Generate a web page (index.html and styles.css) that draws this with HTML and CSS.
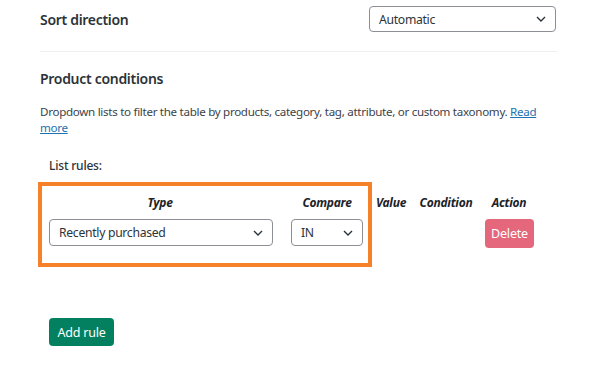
FILE: index.html
```html
<!DOCTYPE html>
<html>
<head>
<meta charset="utf-8">
<link rel="stylesheet" href="styles.css">
</head>
<body>
<div class="page">
  <div class="field-row">
    <div class="label">Sort direction</div>
    <div class="select select-wide">
      <span>Automatic</span>
      <svg class="chev" width="10" height="6" viewBox="0 0 10 6"><path d="M1 1l4 4 4-4" fill="none" stroke="#2c3338" stroke-width="1.4"/></svg>
    </div>
  </div>
  <div class="divider"></div>
  <div class="section-title">Product conditions</div>
  <p class="desc">Dropdown lists to filter the table by products, category, tag, attribute, or custom taxonomy. <a href="#">Read</a> <a href="#">more</a></p>
  <div class="list-label">List rules:</div>
  <div class="rules-wrap">
    <div class="rules">
      <div class="th">Type</div>
      <div class="th">Compare</div>
      <div class="th">Value</div>
      <div class="th">Condition</div>
      <div class="th">Action</div>
      <div class="td">
        <div class="select select-type">
          <span>Recently purchased</span>
          <svg class="chev" width="10" height="6" viewBox="0 0 10 6"><path d="M1 1l4 4 4-4" fill="none" stroke="#2c3338" stroke-width="1.4"/></svg>
        </div>
      </div>
      <div class="td">
        <div class="select select-compare">
          <span>IN</span>
          <svg class="chev" width="10" height="6" viewBox="0 0 10 6"><path d="M1 1l4 4 4-4" fill="none" stroke="#2c3338" stroke-width="1.4"/></svg>
        </div>
      </div>
      <div class="td"></div>
      <div class="td"></div>
      <div class="td td-center"><button class="btn btn-delete">Delete</button></div>
    </div>
    <div class="highlight"></div>
  </div>
  <div class="actions"><button class="btn btn-add">Add rule</button></div>
</div>
</body>
</html>
```
FILE: styles.css
```css
* { box-sizing: border-box; }
html, body { margin: 0; padding: 0; background: #fff; }
body {
  font-family: "Noto Sans", "Open Sans", sans-serif;
  color: #2c3338;
}
.page {
  width: 517px;
  margin-left: 40px;
  padding-top: 6px;
}
.field-row {
  display: flex;
  justify-content: space-between;
  align-items: center;
  height: 26px;
}
.label, .section-title {
  font-size: 14px;
  font-weight: 600;
  color: #2c3338;
  letter-spacing: -0.3px;
}
.select {
  display: flex;
  align-items: center;
  justify-content: space-between;
  border: 1px solid #8c8f94;
  border-radius: 4px;
  background: #fff;
  font-size: 12.2px;
  color: #2c3338;
  padding: 0 9px 0 9px;
  letter-spacing: -0.3px;
}
.select-wide { width: 187px; height: 26px; margin-right: 1px; }
.select-type { width: 224px; height: 27px; }
.select-compare { width: 72px; height: 27px; padding-left: 9px; }
.chev { flex: none; }
.divider {
  height: 1px;
  background: #f0f0f1;
  margin-top: 19px;
}
.section-title {
  margin-top: 17px;
  line-height: 20px;
}
.desc {
  margin: 15px 0 0;
  font-size: 11.6px;
  line-height: 16px;
  color: #3c434a;
  letter-spacing: -0.3px;
}
.desc a { color: #2271b1; }
.list-label {
  margin: 22px 0 0 9px;
  font-size: 12px;
  font-weight: 500;
  line-height: 16px;
  color: #2c3338;
  letter-spacing: -0.2px;
}
.rules-wrap {
  position: relative;
  margin-top: 8px;
  margin-left: -2px;
  width: 500px;
}
.rules {
  display: grid;
  grid-template-columns: 244px 90px 38px 72px 54px;
  padding: 6px 0 17px 0;
}
.th {
  font-style: italic;
  font-weight: 700;
  font-size: 12px;
  color: #1d2327;
  text-align: center;
  height: 31px;
  line-height: 30px;
  letter-spacing: -0.25px;
}
.td { padding-left: 11px; }
.td:nth-child(7) { padding-left: 9px; }
.td-center { padding-left: 0; display: flex; justify-content: center; }
.btn {
  font-family: "Noto Sans", "Open Sans", sans-serif;
  border: none;
  border-radius: 4px;
  color: #fff;
  font-size: 12.5px;
  padding: 0;
  letter-spacing: -0.2px;
}
.btn-delete {
  background: #e4677c;
  width: 49px;
  height: 29px;
  margin-left: 1px;
}
.highlight {
  position: absolute;
  left: 0;
  top: 0;
  width: 334px;
  height: 85px;
  border: 4px solid #f78129;
  pointer-events: none;
}
.actions {
  margin-top: 53px;
  padding-left: 9px;
}
.btn-add {
  background: #038060;
  width: 65px;
  height: 28px;
}
```
